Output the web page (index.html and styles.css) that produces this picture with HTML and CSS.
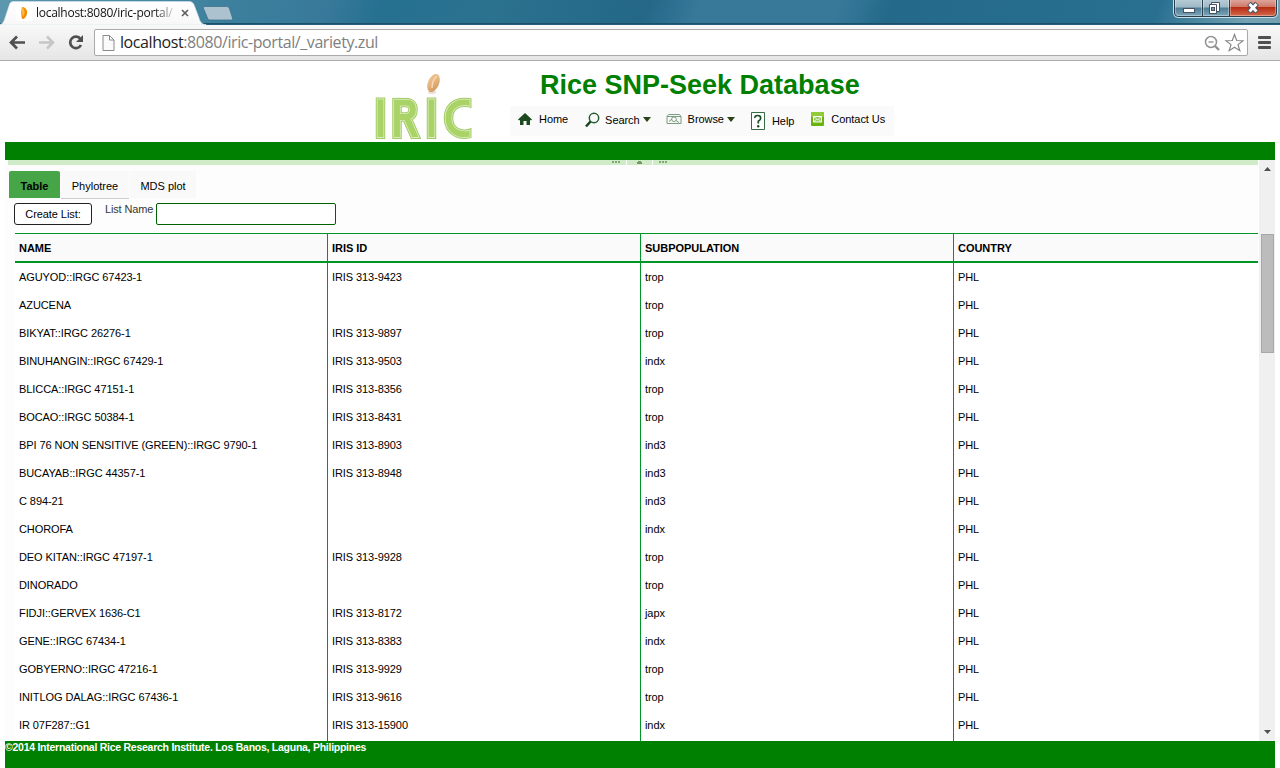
FILE: index.html
```html
<!DOCTYPE html>
<html lang="en">
<head>
<meta charset="utf-8">
<title>Rice SNP-Seek Database</title>
<link rel="stylesheet" href="styles.css">
</head>
<body>
<header class="titlebar">
  <svg class="tab-shape" width="240" height="25" viewBox="0 0 240 25">
    <defs><linearGradient id="tabfill" x1="0" y1="0" x2="0" y2="1"><stop offset="0" stop-color="#fff"/><stop offset="1" stop-color="#f7f7f7"/></linearGradient></defs>
    <path d="M0 24.500C3 24 4 21 5 18L9 6C10 2.500 11 1.500 14 1.500H189C192 1.500 193.500 3 194.500 6L199 18C200 22 202 24.500 206 24.500V25H0Z" fill="url(#tabfill)" stroke="#d5e5ec" stroke-width=".6"/>
    <path d="M205 6.500H226C228 6.500 229 7 229.600 9L232.500 18C233 19.500 232.500 20 231 20H211C208.500 20 208 19.500 207.300 17.500L203.500 8.500C203 7 203.500 6.500 205 6.500Z" fill="#adc2cf" stroke="#356b88" stroke-width=".7"/>
    <rect x="16" y="5" width="16" height="16" fill="#fff"/>
    <path d="M22 7C25.500 7 27.500 10 27 13.500C26.500 17 24.500 19 22 19C21 15 21 11 22 7Z" fill="#ef8b00"/>
    <path d="M22 7.500C25 9 25.500 13 23 17C22 14 21.500 11 22 7.500Z" fill="#ffb83c"/>
    <path d="M182 10L188 16M188 10L182 16" stroke="#606060" stroke-width="1.700"/>
  </svg>
  <span class="tab-title">localhost:8080/iric-portal/</span>
  <div class="window-buttons">
    <svg width="106" height="20" viewBox="0 0 106 20">
      <defs>
        <linearGradient id="wb" x1="0" y1="0" x2="0" y2="1"><stop offset="0" stop-color="#b5cbd5"/><stop offset=".45" stop-color="#9db8c6"/><stop offset=".46" stop-color="#4b7c95"/><stop offset="1" stop-color="#7fa8ba"/></linearGradient>
        <linearGradient id="wc" x1="0" y1="0" x2="0" y2="1"><stop offset="0" stop-color="#dda59a"/><stop offset=".44" stop-color="#cd7565"/><stop offset=".45" stop-color="#b72d12"/><stop offset="1" stop-color="#d56b4e"/></linearGradient>
      </defs>
      <path d="M1.500 0H103.500V13Q103.500 16.500 100 16.500H5Q1.500 16.500 1.500 13Z" fill="url(#wb)"/>
      <path d="M56.500 0H103.500V13Q103.500 16.500 100 16.500H56.500Z" fill="url(#wc)"/>
      <path d="M1.500 0V13Q1.500 16.500 5 16.500H100Q103.500 16.500 103.500 13V0M29.500 0V16M56.500 0V16" fill="none" stroke="#293f4b"/>
      <path d="M2.500 0V12.500Q2.500 15.500 5.500 15.500H28.500V0M30.500 0V15.500H55.500V0M57.500 0V15.500H99.500Q102.500 15.500 102.500 12.500V0" fill="none" stroke="#fff" stroke-opacity=".35"/>
      <path d="M.5 0V13.500Q1 17.500 5 17.500H100Q104.500 17.500 104.500 13V0" fill="none" stroke="#c9dee7"/>
      <rect x="10.500" y="8.500" width="11" height="4" fill="#fff" stroke="#46525f"/>
      <path d="M38.500 2.500H46.500V11.500H38.500Z" fill="#fff" stroke="#46525f"/>
      <path d="M36.500 4.500H43.500V13.500H36.500Z" fill="#fff" stroke="#46525f"/>
      <rect x="38.500" y="7.500" width="3" height="3" fill="#7899aa" stroke="#46525f"/>
      <path d="M76 3.500L84 12M84 3.500L76 12" stroke="#46525f" stroke-width="5"/>
      <path d="M76.500 4L83.500 11.500M83.500 4L76.500 11.500" stroke="#fff" stroke-width="3"/>
    </svg>
  </div>
</header>
<nav class="toolbar">
  <svg class="nav-icons" width="94" height="35" viewBox="0 0 94 35">
    <path d="M25 17.500H12M17 11.500L11 17.500L17 23.500" fill="none" stroke="#505050" stroke-width="2.700"/>
    <path d="M39 17.500H52M47 11.500L53 17.500L47 23.500" fill="none" stroke="#c6c6c6" stroke-width="2.500"/>
    <path d="M80.500 14A5.700 5.700 0 1 0 81 20" fill="none" stroke="#505050" stroke-width="2.700"/>
    <path d="M83 10V17H76Z" fill="#505050"/>
  </svg>
  <div class="omnibox">
    <svg width="13" height="16" viewBox="0 0 13 16"><path d="M1 .5H7.500L12 5V15.500H1ZM7.500 .5V5H12" fill="#fafafa" stroke="#8a8a8a"/></svg>
    <span class="url"><b>localhost</b>:8080/iric-portal/_variety.zul</span>
    <svg width="44" height="24" viewBox="0 0 44 24">
      <circle cx="11" cy="11" r="5.500" fill="none" stroke="#929292" stroke-width="1.500"/><path d="M8.500 11H13.500" stroke="#929292" stroke-width="1.400"/><path d="M15 15L19 19" stroke="#929292" stroke-width="2.400"/>
      <path d="M34.500 3.500L36.700 9.500L43 9.700L38 13.600L39.800 19.700L34.500 16.200L29.200 19.700L31 13.600L26 9.700L32.300 9.500Z" fill="#fff" stroke="#888" stroke-width="1.200"/>
    </svg>
  </div>
  <div class="menu-icon"><i></i><i></i><i></i></div>
</nav>

<main class="page">
  <div class="banner">
    <svg class="logo" width="110" height="72" viewBox="0 0 110 72">
      <defs>
        <linearGradient id="grain" x1="0" y1="0" x2="1" y2="1"><stop offset="0" stop-color="#efc79a"/><stop offset=".5" stop-color="#e6b27c"/><stop offset="1" stop-color="#c88d56"/></linearGradient>
        <clipPath id="outer"><rect x="0" y="26.500" width="102.500" height="41.500"/></clipPath>
        <clipPath id="rim"><rect x="0" y="27.500" width="101.500" height="39.500"/></clipPath>
        <clipPath id="core"><rect x="0" y="28.500" width="100.500" height="37.500"/></clipPath>
      </defs>
      <ellipse cx="63" cy="21" rx="4" ry="2" fill="#e8dfd8"/>
      <ellipse cx="64.500" cy="12" rx="5.500" ry="9.500" transform="rotate(24 64.500 12)" fill="url(#grain)"/>
      <path d="M63 17Q63 9 68 5" stroke="#f6d9b2"/>
      <g clip-path="url(#outer)"><path class="outer" d="M11.500 26V68M28 68V31.500H36.500Q44 31.500 44 38.500T36.500 46H31M37 45L48 70M62.500 26V68M105 33C91 28 79.500 34 79.500 47S91 67 105 61"/></g>
      <g clip-path="url(#rim)"><path class="rim" d="M11.500 26V68M28 68V31.500H36.500Q44 31.500 44 38.500T36.500 46H31M37 45L48 70M62.500 26V68M105 33C91 28 79.500 34 79.500 47S91 67 105 61"/></g>
      <g clip-path="url(#core)"><path class="core" d="M11.500 26V68M28 68V31.500H36.500Q44 31.500 44 38.500T36.500 46H31M37 45L48 70M62.500 26V68M105 33C91 28 79.500 34 79.500 47S91 67 105 61"/></g>
    </svg>
    <div class="heading">
      <h1>Rice SNP-Seek Database</h1>
      <div class="menu">
        <a class="home"><svg width="14" height="12" viewBox="0 0 14 12"><path d="M7 0L14 6.500L13 7.500L12 6.700V12H8.500V8H5.500V12H2V6.700L1 7.500L0 6.500Z" fill="#1c4a1f"/></svg><span>Home</span></a>
        <a class="search"><svg width="15" height="16" viewBox="0 0 15 16"><circle cx="9" cy="6" r="4.700" fill="none" stroke="#275a30" stroke-width="1.500"/><path d="M5.500 9.500L1 14.500" stroke="#174520" stroke-width="2.500"/></svg><span>Search</span><i class="caret"></i></a>
        <a class="browse"><svg width="16" height="12" viewBox="0 0 16 12"><path d="M2.500 1.500H13.500L15 3.500V10.500H1V3.500ZM1 3.500H15" fill="#f5f8f5" stroke="#7c9c83"/><circle cx="8" cy="6.200" r="2.300" fill="#fff" stroke="#7c9c83"/><path d="M3 8.500L6 6M10 7.500L13 9.500" stroke="#7c9c83"/></svg><span>Browse</span><i class="caret"></i></a>
        <a class="help"><svg width="14" height="18" viewBox="0 0 14 18"><path d="M.5 .5H13.500V17.500H.5Z" fill="#fff" stroke="#326c42"/><path d="M4 6Q3.500 3.500 6.700 3.500Q9.700 3.500 9.700 6Q9.700 8 7.300 9.300V11.500" fill="none" stroke="#184a24" stroke-width="1.700"/><circle cx="7.200" cy="14.300" r="1.200" fill="#184a24"/></svg><span>Help</span></a>
        <a class="contact"><svg width="13" height="14" viewBox="0 0 13 14"><rect width="13" height="14" rx="1" fill="#68b40c"/><rect width="13" height="5" rx="1" fill="#91cb39"/><path d="M2.500 4.500H10.500V10H2.500Z" fill="#91c959" stroke="#fff"/><path d="M2.500 4.500L6.500 7.800L10.500 4.500M2.500 10L5.500 7.500M10.500 10L7.500 7.500" fill="none" stroke="#fff" stroke-width=".8"/></svg><span>Contact Us</span></a>
      </div>
    </div>
  </div>
  <div class="green-bar"></div>
  <div class="body">
    <section class="content">
      <div class="splitter"><span class="grip"></span><span class="split-button"></span><span class="grip"></span></div>
      <div class="tabs"><span class="tab selected">Table</span><span class="tab second">Phylotree</span><span class="tab third">MDS plot</span></div>
      <div class="form"><button>Create List:</button><label>List Name</label><input type="text" aria-label="List Name"></div>
      <div class="grid">
        <div class="row head"><span>NAME</span><span>IRIS ID</span><span>SUBPOPULATION</span><span>COUNTRY</span></div>
        <div class="row"><span>AGUYOD::IRGC 67423-1</span><span>IRIS 313-9423</span><span>trop</span><span>PHL</span></div>
        <div class="row"><span>AZUCENA</span><span></span><span>trop</span><span>PHL</span></div>
        <div class="row"><span>BIKYAT::IRGC 26276-1</span><span>IRIS 313-9897</span><span>trop</span><span>PHL</span></div>
        <div class="row"><span>BINUHANGIN::IRGC 67429-1</span><span>IRIS 313-9503</span><span>indx</span><span>PHL</span></div>
        <div class="row"><span>BLICCA::IRGC 47151-1</span><span>IRIS 313-8356</span><span>trop</span><span>PHL</span></div>
        <div class="row"><span>BOCAO::IRGC 50384-1</span><span>IRIS 313-8431</span><span>trop</span><span>PHL</span></div>
        <div class="row"><span>BPI 76 NON SENSITIVE (GREEN)::IRGC 9790-1</span><span>IRIS 313-8903</span><span>ind3</span><span>PHL</span></div>
        <div class="row"><span>BUCAYAB::IRGC 44357-1</span><span>IRIS 313-8948</span><span>ind3</span><span>PHL</span></div>
        <div class="row"><span>C 894-21</span><span></span><span>ind3</span><span>PHL</span></div>
        <div class="row"><span>CHOROFA</span><span></span><span>indx</span><span>PHL</span></div>
        <div class="row"><span>DEO KITAN::IRGC 47197-1</span><span>IRIS 313-9928</span><span>trop</span><span>PHL</span></div>
        <div class="row"><span>DINORADO</span><span></span><span>trop</span><span>PHL</span></div>
        <div class="row"><span>FIDJI::GERVEX 1636-C1</span><span>IRIS 313-8172</span><span>japx</span><span>PHL</span></div>
        <div class="row"><span>GENE::IRGC 67434-1</span><span>IRIS 313-8383</span><span>indx</span><span>PHL</span></div>
        <div class="row"><span>GOBYERNO::IRGC 47216-1</span><span>IRIS 313-9929</span><span>trop</span><span>PHL</span></div>
        <div class="row"><span>INITLOG DALAG::IRGC 67436-1</span><span>IRIS 313-9616</span><span>trop</span><span>PHL</span></div>
        <div class="row last"><span>IR 07F287::G1</span><span>IRIS 313-15900</span><span>indx</span><span>PHL</span></div>
      </div>
    </section>
    <aside class="scrollbar">
      <svg width="7" height="4" viewBox="0 0 7 4"><path d="M3.500 0L7 4H0Z" fill="#505050"/></svg>
      <div class="thumb"></div>
      <svg class="down" width="7" height="4" viewBox="0 0 7 4"><path d="M0 0H7L3.500 4Z" fill="#505050"/></svg>
    </aside>
  </div>
  <footer><span>©2014 International Rice Research Institute. Los Banos, Laguna, Philippines</span></footer>
</main>
</body>
</html>
```
FILE: styles.css
```css
* { box-sizing: border-box; }
body { margin: 0; width: 1280px; height: 768px; overflow: hidden; background: #fff; color: #000; font: 11px/14px "Liberation Sans", Arial, sans-serif; display: flex; flex-direction: column; }
svg { display: block; flex: none; }
.titlebar { position: relative; height: 25px; flex: none; display: flex; justify-content: space-between; background: linear-gradient(to bottom, transparent 23px, #174b66 23px, #2c6481 25px), linear-gradient(110deg, #5d96af 0, #3c809d 220px, #38799a 310px, #267090 360px, #2b728f 470px, #246787 610px, #38799a 660px, #38799a 790px, #246989 840px, #286f90 1090px, #75a2b3 1180px, #6b9bb0 1280px); }
.tab-title { position: absolute; left: 36px; top: 5px; width: 137px; overflow: hidden; white-space: nowrap; font: 12px/16px "Open Sans", "Noto Sans", sans-serif; letter-spacing: -.27px; background: linear-gradient(90deg, #111 118px, #ccc 137px); background-clip: text; color: transparent; }
.window-buttons { margin-right: 1px; }
.toolbar { height: 36px; flex: none; display: flex; background: linear-gradient(#f8f8f8, #e6e6e6); border-bottom: 1px solid #acacac; }
.omnibox { width: 1154px; height: 27px; margin-top: 4px; padding: 0 3px 0 7px; display: flex; align-items: center; background: #fff; border: 1px solid #aaa; border-radius: 2px; }
.url { margin-left: 5px; flex: 1; color: #808080; font: 16px/24px "Open Sans", "Noto Sans", sans-serif; letter-spacing: -.42px; padding-bottom: 1px; }
.url b { color: #222; font-weight: 400; }
.menu-icon { display: flex; flex-direction: column; gap: 2px; padding: 11px 0 0 10px; }
.menu-icon i { width: 13px; height: 3px; border-radius: 1px; background: #505050; }
.page { flex: 1; min-height: 0; margin: 0 5px; display: flex; flex-direction: column; }
.banner { height: 81px; flex: none; display: flex; }
.logo { margin: 10px 0 0 364px; width: 110px; }
.logo path { fill: none; }
.logo .outer { stroke: #a3cb64; stroke-width: 9.5px; }
.logo .rim { stroke: #d9edb9; stroke-width: 7.5px; }
.logo .core { stroke: #a9d267; stroke-width: 5.8px; }
.logo > path { stroke-width: 1.5px; }
.heading { margin: 8px 0 0 31px; width: 384px; display: flex; flex-direction: column; }
h1 { margin: 0 0 5px 30px; height: 32px; color: #008000; font-size: 27px; line-height: 32px; white-space: nowrap; }
.menu { height: 30px; background: #fafafa; display: flex; align-items: flex-start; padding: 0 0 0 8px; letter-spacing: -.06px; }
.menu a { display: flex; align-items: center; height: 26px; }
.home span { margin-left: 7px; }
.search { margin-left: 17px; }
.search svg { margin-top: 1px; }
.search span { margin-left: 5px; padding-top: 2px; }
.caret { width: 0; height: 0; margin-left: 3px; border: 4px solid transparent; border-top: 5px solid #294417; border-bottom: 0; }
.browse { margin-left: 15px; }
.browse span { margin-left: 6px; }
.help { margin-left: 16px; }
.menu .help { height: 30px; }
.help span { margin-left: 7px; }
.contact { margin-left: 17px; }
.contact span { margin-left: 7px; }
.green-bar { height: 18px; flex: none; background: #008000; }
.body { flex: 1; min-height: 0; display: flex; justify-content: space-between; }
.content { width: 1253px; background: #fdfdfd; overflow: hidden; }
.splitter { height: 5px; margin-left: 3px; background: #d0ebc7; display: flex; justify-content: center; gap: 6px; padding-left: 13px; }
.grip { width: 8px; height: 2px; margin-top: 1px; background: repeating-linear-gradient(90deg, #83a875 0 2px, transparent 2px 3px); }
.split-button { width: 27px; height: 5px; border: solid #fff; border-width: 0 1px; background: linear-gradient(#76966b, #76966b) 50% 1px / 3px 1px no-repeat, linear-gradient(#76966b, #76966b) 50% 2px / 5px 2px no-repeat; }
.tabs { display: flex; margin: 6px 0 0 4px; height: 28px; gap: 1px; line-height: 30px; }
.tab { height: 27px; text-align: center; background: #f9f9f9; }
.selected { width: 51px; background: #46a546; font-weight: 700; border-radius: 2px 2px 0 0; }
.second { width: 68px; height: 28px; border-bottom: 1px solid #ccc; }
.third { width: 66px; }
.form { height: 34px; display: flex; padding: 4px 0 0 9px; align-items: flex-start; }
button { width: 78px; height: 22px; padding: 0; background: #fff; color: #000; border: 1px solid #222; border-radius: 3px; font: inherit; letter-spacing: -.08px; }
label { width: 48px; margin: -1px 3px 0 13px; color: #363636; letter-spacing: -.15px; white-space: nowrap; }
input { width: 180px; height: 22px; padding: 0; border: 1px solid #006000; border-radius: 2px; background: #fff; }
.grid { margin-left: 10px; border-top: 1px solid #009627; background: #fff; }
.row { display: grid; grid-template-columns: 313px 313px 313px 1fr; height: 28px; line-height: 28px; letter-spacing: -.08px; }
.row span { padding-left: 4px; border-right: 1px solid #009627; }
.row span:last-child { border-right: 0; }
.head { height: 29px; border-bottom: 2px solid #009627; background: #fafafa; font-weight: 700; letter-spacing: -.03px; }
.last { height: 32px; }
.scrollbar { width: 16px; background: #f0f0f0; display: flex; flex-direction: column; align-items: center; padding-top: 7px; }
.thumb { width: 13px; height: 119px; margin: 63px 0 0 1px; background: #bcbcbc; border: 1px solid #a7a7a7; }
.down { margin: auto 0 7px; }
footer { height: 27px; flex: none; background: #008000; color: #fff; font-size: 10.5px; line-height: 13px; font-weight: 700; letter-spacing: -.26px; }
```
